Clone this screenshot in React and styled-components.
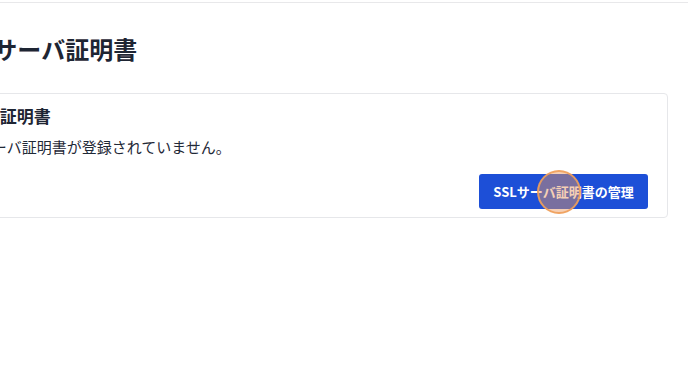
import React from "react";
import styled, { createGlobalStyle } from "styled-components";

const Global = createGlobalStyle`
  html, body { margin: 0; padding: 0; background: #ffffff; }
  body {
    font-family: "Noto Sans CJK JP", "Noto Sans", sans-serif;
    color: #1f2937;
    overflow: hidden;
  }
`;

const TopBar = styled.header`
  height: 2px;
  border-bottom: 1px solid #e8e8ea;
`;

const Main = styled.main`
  margin-left: -50px;
  width: 718px;
  padding-top: 30px;
  box-sizing: border-box;
`;

const Title = styled.h1`
  margin: 0;
  font-size: 24px;
  line-height: 32px;
  font-weight: 700;
  color: #1e2533;
  white-space: nowrap;
`;

const Card = styled.section`
  margin-top: 28px;
  border: 1px solid #e6e7ea;
  border-radius: 4px;
  padding: 10px 19px 8px 18px;
  background: #fff;
`;

const CardTitle = styled.h2`
  margin: 0;
  font-size: 17px;
  line-height: 24px;
  font-weight: 700;
  color: #1e2533;
  white-space: nowrap;
`;

const Message = styled.p`
  margin: 8px 0 0 -18px;
  font-size: 15px;
  line-height: 21px;
  color: #1f2937;
  white-space: nowrap;
`;

const Footer = styled.div`
  margin-top: 17px;
  display: flex;
  justify-content: flex-end;
`;

const ButtonWrap = styled.div`
  position: relative;
`;

const Button = styled.button`
  height: 35px;
  width: 169px;
  border: none;
  border-radius: 3px;
  background: #1d4fd7;
  color: #ffffff;
  font-family: inherit;
  font-size: 13px;
  font-weight: 700;
  display: flex;
  align-items: center;
  justify-content: center;
  cursor: pointer;
`;

const Cursor = styled.span`
  position: absolute;
  left: 58px;
  top: -4px;
  width: 40px;
  height: 40px;
  border-radius: 50%;
  border: 2px solid rgba(240, 160, 90, 0.9);
  background: rgba(235, 150, 90, 0.45);
  pointer-events: none;
`;

export default function App() {
  return (
    <>
      <Global />
      <TopBar />
      <Main>
        <Title>SSLサーバ証明書</Title>
        <Card>
          <CardTitle>SSL証明書</CardTitle>
          <Message>SSLサーバ証明書が登録されていません。</Message>
          <Footer>
            <ButtonWrap>
              <Button>SSLサーバ証明書の管理</Button>
              <Cursor />
            </ButtonWrap>
          </Footer>
        </Card>
      </Main>
    </>
  );
}
